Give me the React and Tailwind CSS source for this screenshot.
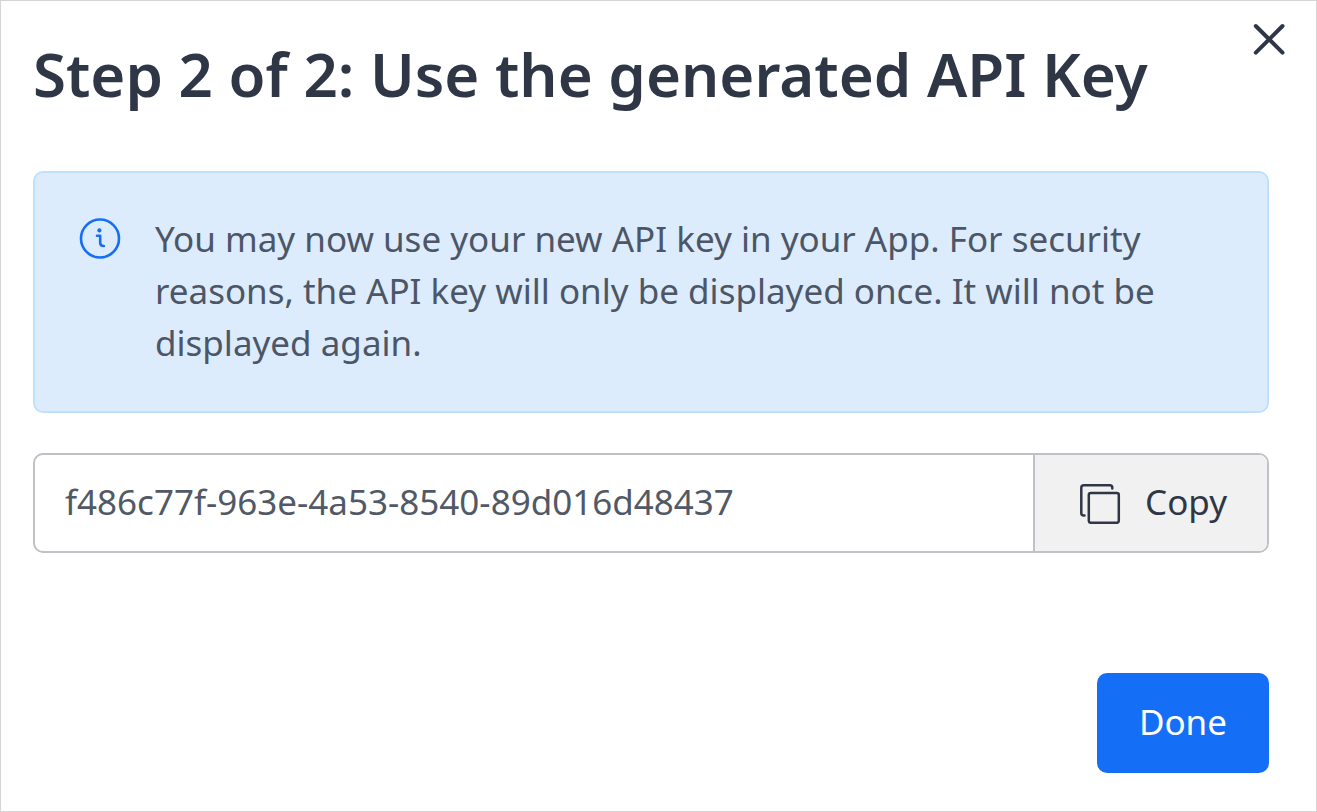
import React from "react";

const KEY = "f486c77f-963e-4a53-8540-89d016d48437";

export default function App() {
  return (
    <div
      role="dialog"
      aria-labelledby="title"
      className="relative flex min-h-screen flex-col border border-[#d5d5d5] bg-white pt-[35px] pr-[47px] pb-[38px] pl-8 text-[35px] font-['Noto_Sans',sans-serif]"
    >
      <button type="button" aria-label="Close" className="absolute top-[22px] right-[31px] text-[#2f3747]">
        <svg className="h-8 w-8" viewBox="0 0 32 32" fill="none" stroke="currentColor" strokeWidth="4" strokeLinecap="round">
          <path d="M2.800 3l26.700 26.700M29.500 3L2.800 29.700" />
        </svg>
      </button>
      <h1 id="title" className="text-[60px] leading-[76px] font-semibold text-[#2f3747]">
        Step 2 of 2: Use the generated API Key
      </h1>
      <div role="note" className="mt-[59px] flex gap-[34px] rounded-[10px] border-2 border-[#c0e1fe] bg-[#dcecfd] pt-10 pr-10 pb-[42px] pl-11">
        <svg className="mt-[5px] h-[42px] w-[42px] shrink-0 text-[#156ff6]" viewBox="0 0 42 42" fill="none" stroke="currentColor" strokeWidth="2.600" strokeLinecap="round" strokeLinejoin="round">
          <circle cx="21" cy="20.500" r="19" />
          <path d="M18 17.800h3.200v7q0 3.200 3.600 3.200" />
          <circle cx="20.400" cy="12.400" r="2.100" fill="currentColor" stroke="none" />
        </svg>
        <p className="leading-[52px] text-[#4c5667]">
          You may now use your new API key in your App. For security reasons, the API key will only be displayed once. It will not be displayed again.
        </p>
      </div>
      <div className="mt-10 flex h-[100px] overflow-hidden rounded-[10px] border-2 border-[#c0c0c6]">
        <input
          aria-label="API key"
          readOnly
          value={KEY}
          className="min-w-0 flex-1 px-[30px] pb-[2px] text-[#525966] outline-none"
        />
        <button type="button" className="flex items-center gap-[23px] border-l-2 border-[#c0c0c6] bg-[#f1f1f1] pr-10 pl-[45px] pb-[2px] text-[#2f3747]">
          <svg className="h-11 w-[42px]" viewBox="0 0 42 44" fill="none" stroke="currentColor" strokeWidth="2.500" strokeLinecap="round">
            <rect x="8.800" y="13" width="30" height="29.800" rx="2" />
            <path d="M4.500 35.500H3.800q-2.500 0-2.500-2.500V7.700q0-2.500 2.500-2.500h26q2.500 0 2.500 2.500v.8" />
          </svg>
          Copy
        </button>
      </div>
      <div className="mt-auto flex justify-end">
        <button type="button" className="h-[100px] rounded-[10px] bg-[#156ff6] px-[42px] pb-[2px] text-white">Done</button>
      </div>
    </div>
  );
}
